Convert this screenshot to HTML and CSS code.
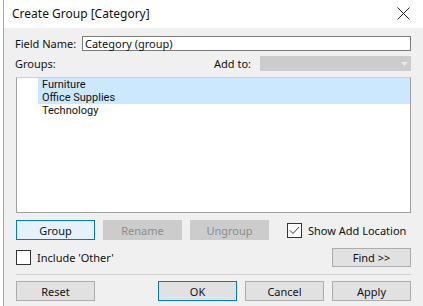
FILE: index.html
```html
<!DOCTYPE html>
<html>
<head>
<meta charset="utf-8">
<link rel="stylesheet" href="styles.css">
</head>
<body>
<div class="window">
  <div class="titlebar">
    <span class="title">Create Group [Category]</span>
    <svg class="close" width="13" height="13" viewBox="0 0 13 13"><path d="M0.5 0.5 L12.5 12.5 M12.5 0.5 L0.5 12.5" stroke="#222" stroke-width="1"/></svg>
  </div>
  <div class="content">
    <div class="row field-row">
      <span class="label">Field Name:</span>
      <div class="input">Category (group)</div>
    </div>
    <div class="row groups-row">
      <span class="label">Groups:</span>
      <span class="label addto">Add to:</span>
      <div class="select"><svg class="arrow" width="7" height="4" viewBox="0 0 7 4"><path d="M0 0 L7 0 L3.5 4 Z" fill="#eaeaea"/></svg></div>
    </div>
    <div class="listbox">
      <div class="item sel">Furniture</div>
      <div class="item sel">Office Supplies</div>
      <div class="item">Technology</div>
    </div>
    <div class="row btn-row">
      <div class="btn primary-focus">Group</div>
      <div class="btn disabled">Rename</div>
      <div class="btn disabled">Ungroup</div>
      <div class="check checked">
        <span class="box"><svg width="11" height="9" viewBox="0 0 11 9"><path d="M1 4.5 L4 7.5 L10 1" stroke="#333" stroke-width="1" fill="none"/></svg></span>
        <span>Show Add Location</span>
      </div>
    </div>
    <div class="row other-row">
      <div class="check">
        <span class="box"></span>
        <span>Include 'Other'</span>
      </div>
      <div class="btn find">Find &gt;&gt;</div>
    </div>
    <div class="sep"></div>
    <div class="row bottom-row">
      <div class="btn">Reset</div>
      <div class="right-btns">
        <div class="btn ok">OK</div>
        <div class="btn">Cancel</div>
        <div class="btn">Apply</div>
      </div>
    </div>
  </div>
</div>
</body>
</html>
```
FILE: styles.css
```css
html, body {
  margin: 0;
  padding: 0;
  background: #ffffff;
}
body {
  font-family: "Noto Sans", "Open Sans", sans-serif;
  font-size: 11px;
  color: #111;
  width: 423px;
  height: 306px;
  overflow: hidden;
}
.window {
  margin-left: 3px;
  border-left: 1px solid #a8a8a8;
  height: 306px;
  display: flex;
  flex-direction: column;
}
.titlebar {
  height: 28px;
  background: #fff;
  display: flex;
  align-items: center;
  justify-content: space-between;
  padding: 0 13px 0 8px;
  flex: none;
}
.title {
  font-size: 12px;
  color: #111;
  margin-top: -2px;
}
.close {
  margin-top: -2px;
}
.content {
  flex: 1;
  background: #f0f0f0;
  padding: 8px 12px 0 12px;
  display: flex;
  flex-direction: column;
}
.row {
  display: flex;
  align-items: center;
}
.field-row {
  height: 15px;
}
.label {
  white-space: nowrap;
}
.field-row .label {
  width: 67px;
  margin-left: -1px;
}
.input {
  flex: 1;
  height: 13px;
  border: 1px solid #7a7a7a;
  background: #fff;
  line-height: 13px;
  padding-left: 2px;
}
.groups-row {
  height: 15px;
  margin-top: 5px;
}
.groups-row .label:first-child {
  margin-left: -1px;
  flex: 1;
}
.addto {
  margin-right: 9px;
}
.select {
  width: 151px;
  height: 15px;
  background: #cccccc;
  position: relative;
}
.arrow {
  position: absolute;
  right: 3px;
  top: 6px;
}
.listbox {
  margin-top: 6px;
  height: 136px;
  border: 1px solid #a0a0a0;
  border-top-color: #cfcfcf;
  background: #fff;
  padding-left: 21px;
  box-sizing: border-box;
}
.item {
  height: 13px;
  line-height: 13px;
  padding-left: 4px;
  font-family: Roboto, "Noto Sans", sans-serif;
  font-size: 11px;
  overflow: hidden;
}
.item.sel {
  background: #cce8ff;
}
.btn-row {
  margin-top: 7px;
  height: 20px;
}
.btn {
  width: 77px;
  height: 18px;
  border: 1px solid #adadad;
  background: #e1e1e1;
  display: flex;
  align-items: center;
  justify-content: center;
  flex: none;
}
.btn-row .btn + .btn {
  margin-left: 8px;
}
.primary-focus {
  background: #e5f1fb;
  border-color: #0078d7;
}
.disabled {
  background: #cccccc;
  border-color: #cccccc;
  color: #8d8d8d;
}
.check {
  display: flex;
  align-items: center;
  white-space: nowrap;
}
.box {
  width: 13px;
  height: 13px;
  border: 1px solid #333;
  background: #fff;
  display: flex;
  align-items: center;
  justify-content: center;
  margin-right: 6px;
  flex: none;
}
.btn-row .check {
  margin-left: 18px;
}
.other-row {
  margin-top: 8px;
  height: 19px;
  justify-content: space-between;
}
.find {
  height: 17px;
}
.sep {
  margin-top: 7px;
  height: 1px;
  background: #d0d0d0;
}
.bottom-row {
  margin-top: 6px;
  height: 20px;
  justify-content: space-between;
}
.right-btns {
  display: flex;
  gap: 8px;
}
.ok {
  background: #e1e1e1;
  border-color: #0078d7;
}
```
